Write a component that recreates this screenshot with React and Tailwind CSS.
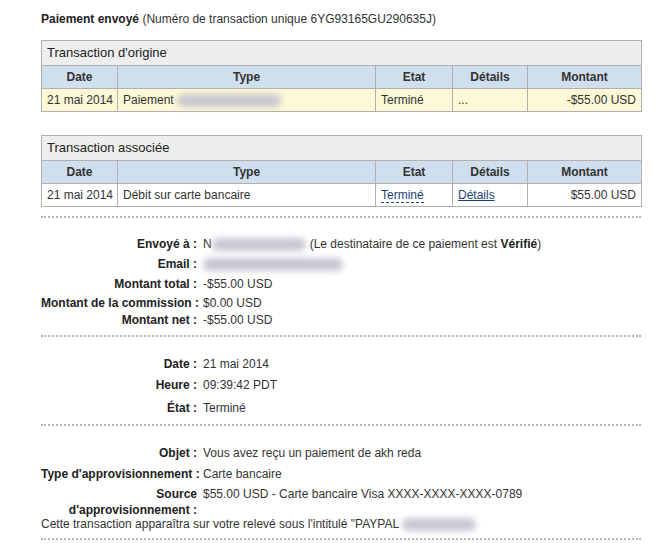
import React from "react";

const font = { fontFamily: '"Liberation Sans", Arial, sans-serif' };

function Blur({ w, className = "" }) {
  return (
    <span
      className={`inline-block h-[13px] rounded-full bg-[#c9c6d2] align-middle blur-[3px] ${className}`}
      style={{ width: w }}
    />
  );
}

function TxTable({ title, children }) {
  return (
    <table className="w-[600px] table-fixed border-collapse border border-[#b0b0b0] text-[12px] text-[#333]">
      <colgroup>
        <col className="w-[76px]" />
        <col className="w-[258px]" />
        <col className="w-[77px]" />
        <col className="w-[75px]" />
        <col className="w-[114px]" />
      </colgroup>
      <thead>
        <tr className="h-[25px] bg-[#eeeeee]">
          <th colSpan={5} className="border border-[#b0b0b0] px-[5px] text-left text-[13px] font-normal text-[#222]">
            {title}
          </th>
        </tr>
        <tr className="h-[23px] bg-[#cfdfee] font-bold">
          <th className="border border-[#b0b0b0]">Date</th>
          <th className="border border-[#b0b0b0]">Type</th>
          <th className="border border-[#b0b0b0]">Etat</th>
          <th className="border border-[#b0b0b0]">Détails</th>
          <th className="border border-[#b0b0b0]">Montant</th>
        </tr>
      </thead>
      <tbody>{children}</tbody>
    </table>
  );
}

function Row({ label, children, className = "" }) {
  return (
    <div className={`flex leading-[15px] ${className}`}>
      <div className="w-[156px] shrink-0 whitespace-nowrap text-right font-bold text-[#222]">{label}</div>
      <div className="whitespace-nowrap pl-[6px]">{children}</div>
    </div>
  );
}

function Dots() {
  return <div className="w-[600px] border-t-2 border-dotted border-[#b5b5b5]" />;
}

const td = "whitespace-nowrap border border-[#b0b0b0] px-[5px]";

export default function App() {
  return (
    <div className="min-h-[551px] bg-white pl-[41px] pt-[11px] text-[12px] text-[#333]" style={font}>
      <div className="leading-[16px]">
        <span className="font-bold text-[#222]">Paiement envoyé</span> (Numéro de transaction unique 6YG93165GU290635J)
      </div>

      <div className="mt-[13px]">
        <TxTable title="Transaction d'origine">
          <tr className="h-[23px] bg-[#fdf9d6]">
            <td className={td}>21 mai 2014</td>
            <td className={td}>
              Paiement <Blur w={104} />
            </td>
            <td className={td}>Terminé</td>
            <td className={td}>...</td>
            <td className={`${td} text-right`}>-$55.00 USD</td>
          </tr>
        </TxTable>
      </div>

      <div className="mt-[23px]">
        <TxTable title="Transaction associée">
          <tr className="h-[23px] bg-white">
            <td className={td}>21 mai 2014</td>
            <td className={td}>Débit sur carte bancaire</td>
            <td className={td}>
              <span className="border-b border-dashed border-[#1b3f78] text-[#1b3f78]">Terminé</span>
            </td>
            <td className={td}>
              <span className="text-[#1b3f78] underline">Détails</span>
            </td>
            <td className={`${td} text-right`}>$55.00 USD</td>
          </tr>
        </TxTable>
      </div>

      <div className="mt-[9px]">
        <Dots />
      </div>

      <div className="pt-[19px] pb-[6px]">
        <Row label="Envoyé à :" className="h-[20px]">
          N<Blur w={94} className="mr-[4px]" />(Le destinataire de ce paiement est <span className="font-bold text-[#222]">Vérifié</span>)
        </Row>
        <Row label="Email :" className="h-[20px]">
          <Blur w={140} />
        </Row>
        <Row label="Montant total :" className="h-[19px]">-$55.00 USD</Row>
        <Row label="Montant de la commission :" className="h-[17px]">$0.00 USD</Row>
        <Row label="Montant net :" className="h-[16px]">-$55.00 USD</Row>
      </div>

      <Dots />

      <div className="pt-[20px] pb-[7px]">
        <Row label="Date :" className="h-[21px]">21 mai 2014</Row>
        <Row label="Heure :" className="h-[23px]">09:39:42 PDT</Row>
        <Row label="État :" className="h-[16px]">Terminé</Row>
      </div>

      <Dots />

      <div className="pt-[20px] pb-[6px]">
        <Row label="Objet :" className="h-[21px]">Vous avez reçu un paiement de akh reda</Row>
        <Row label="Type d'approvisionnement :" className="h-[19px]">Carte bancaire</Row>
        <Row label={<>Source<br />d'approvisionnement :</>} className="leading-[16px]">
          $55.00 USD - Carte bancaire Visa XXXX-XXXX-XXXX-0789
        </Row>
        <div className="-mt-[1px] whitespace-nowrap leading-[15px]">
          Cette transaction apparaîtra sur votre relevé sous l'intitulé "PAYPAL <Blur w={74} />
        </div>
      </div>

      <Dots />
    </div>
  );
}
